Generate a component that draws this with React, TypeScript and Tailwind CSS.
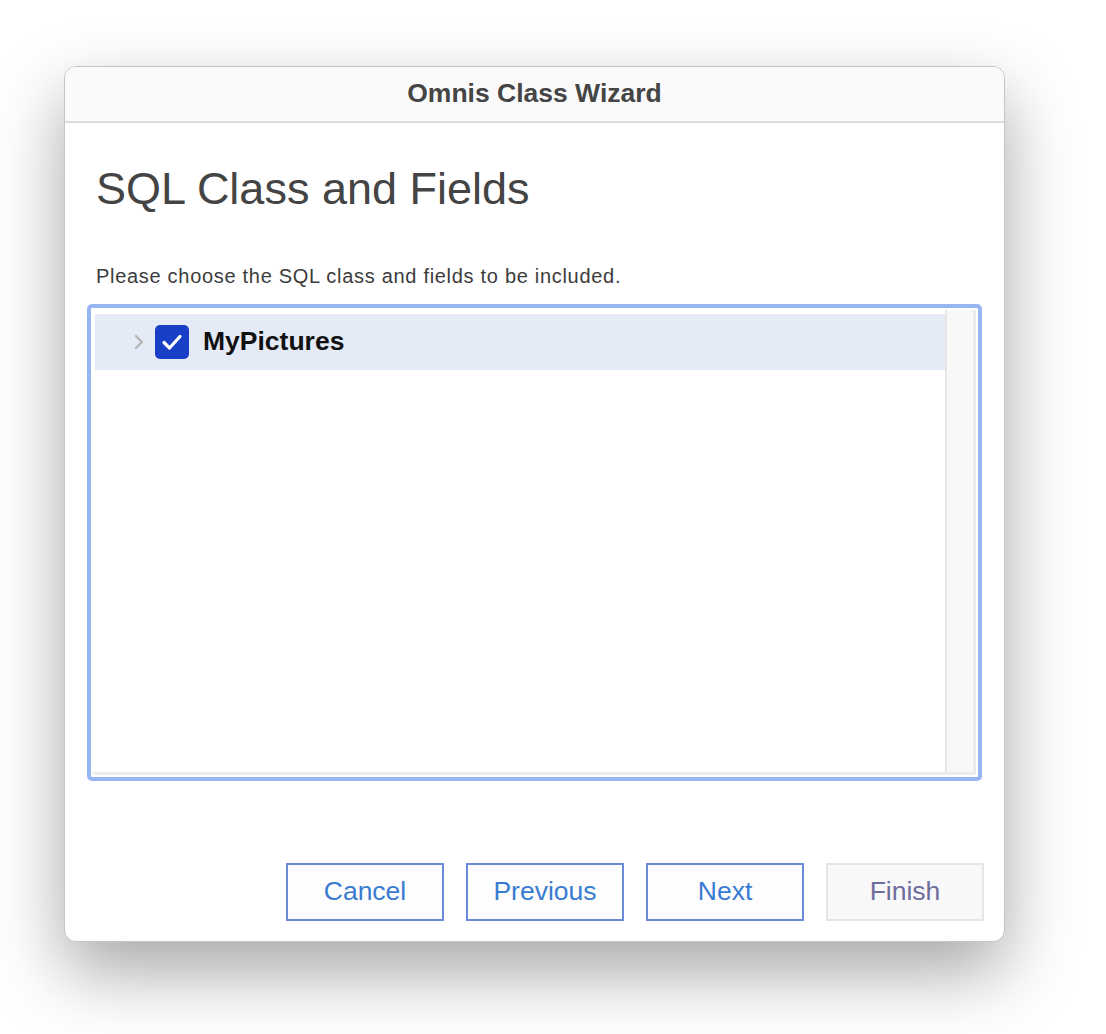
import React from 'react';

const font = { fontFamily: '"Liberation Sans", Arial, sans-serif' };

const WizardButton: React.FC<{ label: string; disabled?: boolean }> = ({ label, disabled }) => (
  <button
    className={
      disabled
        ? 'w-[158px] h-[58px] border-2 border-[#e6e6e6] bg-[#f8f8f8] text-[#6e6e9c] text-[26.5px]'
        : 'w-[158px] h-[58px] border-2 border-[#6b8ad9] bg-[#fdfdfd] text-[#3a7bd2] text-[26.5px]'
    }
  >
    {label}
  </button>
);

const App: React.FC = () => {
  return (
    <div className="w-[1106px] h-[1034px] bg-white pt-[66px] pl-[64px]" style={font}>
      <div className="w-[941px] h-[876px] rounded-[12px] border border-[#c4c4c4] bg-white shadow-[0_30px_70px_rgba(0,0,0,0.35)] overflow-hidden flex flex-col">
        {/* title bar */}
        <div className="h-[56px] shrink-0 bg-[#fafafa] border-b-2 border-[#dcdcdc] flex items-center justify-center">
          <span className="text-[26.5px] font-bold text-[#454545]">Omnis Class Wizard</span>
        </div>

        <div className="flex-1 flex flex-col pl-[22px] pr-[20px]">
          <h1 className="mt-[40px] ml-[9px] text-[45px] leading-[52px] text-[#444444]">SQL Class and Fields</h1>
          <p className="mt-[50px] ml-[9px] text-[20px] leading-[22px] tracking-[0.7px] text-[#3c3c3c]">
            Please choose the SQL class and fields to be included.
          </p>

          {/* tree list */}
          <div className="mt-[17px] mr-[2px] h-[477px] rounded-[5px] border-[4px] border-[#97b5f3] bg-white p-[2px] flex">
            <div className="flex-1 flex border-r-[3px] border-b-[3px] border-[#ececec]">
              <div className="flex-1 pt-[4px] pl-[2px]">
                <div className="h-[56px] bg-[#e4eaf6] flex items-center pl-[38px]">
                  <svg width="12" height="18" viewBox="0 0 12 18" className="mr-[10px]">
                    <path d="M3 3 L9 9 L3 15" fill="none" stroke="#b5b5b5" strokeWidth="2.2" strokeLinecap="round" strokeLinejoin="round" />
                  </svg>
                  <div className="w-[34px] h-[34px] rounded-[5px] bg-[#1a3fc7] flex items-center justify-center mr-[14px]">
                    <svg width="24" height="24" viewBox="0 0 24 24">
                      <path d="M4 12.5 L9.5 18 L20 6.5" fill="none" stroke="white" strokeWidth="3.2" strokeLinecap="round" strokeLinejoin="round" />
                    </svg>
                  </div>
                  <span className="text-[26.5px] font-bold text-[#111111]">MyPictures</span>
                </div>
              </div>
              <div className="w-[28px] bg-[#f8f8f8] border-l-2 border-[#e6e6e6]" />
            </div>
          </div>

          <div className="mt-[82px] flex justify-end gap-[22px]">
            <WizardButton label="Cancel" />
            <WizardButton label="Previous" />
            <WizardButton label="Next" />
            <WizardButton label="Finish" disabled />
          </div>
        </div>
      </div>
    </div>
  );
};

export default App;
